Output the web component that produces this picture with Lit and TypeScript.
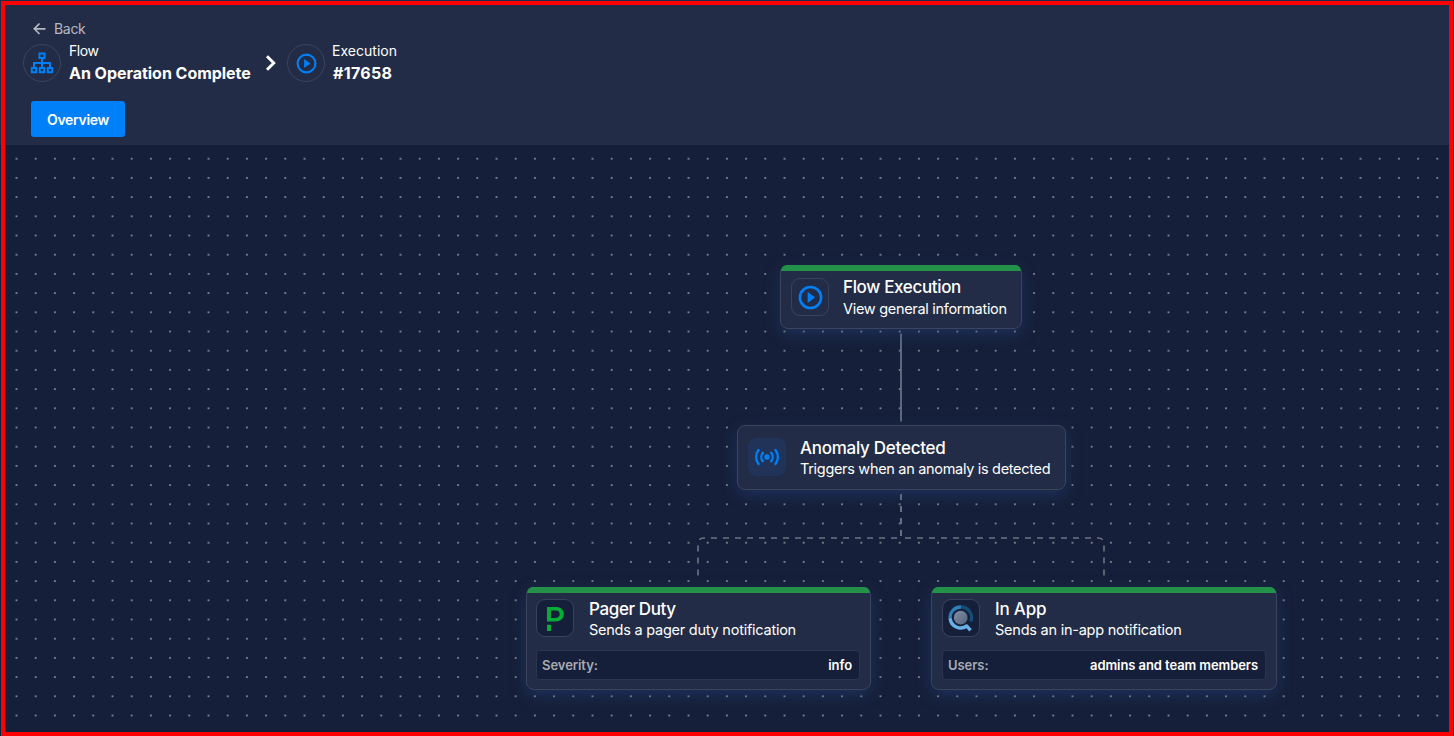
import { LitElement, html, css, svg } from "lit";
import { customElement, property } from "lit/decorators.js";

const play = svg`<circle cx="12" cy="12" r="10.6" fill="none" stroke="#0080f8" stroke-width="2.5"/><path d="M9.2 6.6v10.8l7.4-5.400z" fill="#0080f8"/>`;
const icons: Record<string, unknown> = {
  play: html`<svg width="25" height="25" viewBox="-0.5 -0.5 25 25">${play}</svg>`,
  signal: html`<svg width="26" height="20" viewBox="0 0 26 20" fill="none" stroke="#0080f8" stroke-width="2.3" stroke-linecap="round">
    <circle cx="13" cy="10" r="2.700" fill="#0080f8" stroke="none"/>
    <path d="M8.800 5.800a6.600 6.600 0 0 0 0 8.400M17.200 5.800a6.600 6.600 0 0 1 0 8.400M4.500 3a11.500 11.500 0 0 0 0 14M21.500 3a11.500 11.500 0 0 1 0 14"/></svg>`,
  pager: html`<svg width="24" height="28" viewBox="0 0 24 28" fill="#06ac38">
    <path fill-rule="evenodd" d="M4 3h8.500c5.300 0 8.300 2.700 8.300 7s-3 7.500-8.300 7.500H4zM8 6.500v7.400h4.500c2.700 0 4.200-1.300 4.200-3.800s-1.500-3.600-4.200-3.600z"/>
    <path d="M4 20.700h4v6.300h-4z"/></svg>`,
  app: html`<svg width="28" height="28" viewBox="0 0 28 28" fill="none">
    <defs><linearGradient id="core" x1="0" y1="0" x2="1" y2="1"><stop stop-color="#8490a5"/><stop offset="1" stop-color="#53637e"/></linearGradient></defs>
    <circle cx="13.700" cy="13.700" r="6.900" fill="url(#core)"/>
    <path d="M14 3a10.600 10.600 0 0 1 9.800 14.500" stroke="#154c78" stroke-width="3.300"/>
    <path d="M3.200 15a10.600 10.600 0 0 1 10.800-12" stroke="#2f7fb8" stroke-width="3.300"/>
    <path d="M3.200 14.500a10.500 10.500 0 0 0 16.600 7.500l3.700 4.300" stroke="#68b0e5" stroke-width="3.400" stroke-linejoin="round"/></svg>`,
};

@customElement("flow-node")
class FlowNode extends LitElement {
  @property() icon = "play";
  @property() heading = "";
  @property() text = "";
  @property() label = "";
  @property() value = "";
  @property({ type: Boolean }) done = false;
  static styles = css`
    :host { display: block; box-sizing: border-box; border: 1px solid #3b445b; border-radius: 8px; background: #232c46; position: relative; box-shadow: 0 5px 16px rgba(39, 75, 139, .42); color: #fff; }
    .bar { position: absolute; top: -1px; left: 0; right: 0; height: 6px; border-radius: 7px 7px 0 0; background: #249148; }
    .head { display: flex; padding: var(--head-top, 12px) 0 0 var(--inset, 10px); gap: var(--gap, 14px); }
    .tile { box-sizing: border-box; flex: none; width: 38px; height: 38px; border: 1px solid #38435b; border-radius: 9px; display: flex; align-items: center; justify-content: center; }
    .tile.signal { background: #22335a; border-color: #22335a; }
    .tile.pager, .tile.app { background: #161f39; }
    svg { display: block; }
    .title { font-size: 17px; line-height: var(--title-lh, 22px); font-weight: 500; white-space: nowrap; letter-spacing: var(--title-ls, -.2px); margin-top: var(--title-top, -2px); }
    .sub { font-size: 14.500px; line-height: 20px; white-space: nowrap; letter-spacing: var(--sub-ls, -.23px); }
    .field { box-sizing: border-box; display: flex; justify-content: space-between; align-items: center; height: 30px; margin: 10px 10px 0 var(--inset, 10px); padding: 0 7px 0 5px; border: 1px solid #2b354e; border-radius: 4px; background: #161f39; font-size: 13px; font-weight: 600; letter-spacing: -.08px; }
    .label { color: #a6abb5; letter-spacing: -.05px; }
  `;
  render() {
    return html`${this.done ? html`<div class="bar"></div>` : ""}
      <div class="head"><div class="tile ${this.icon}">${icons[this.icon]}</div>
        <div><div class="title">${this.heading}</div><div class="sub">${this.text}</div></div></div>
      ${this.label ? html`<div class="field"><span class="label">${this.label}</span><span>${this.value}</span></div>` : ""}`;
  }
}

@customElement("app-root")
class AppRoot extends LitElement {
  static styles = css`
    :host { display: block; width: 1454px; height: 736px; font-family: Inter, "Liberation Sans", sans-serif; color: #fff; background: #161f39; position: relative; overflow: hidden; }
    .page { display: flex; flex-direction: column; height: 100%; }
    .frame { position: absolute; inset: 1px 1px 0 1px; border: 4px solid #f00; pointer-events: none; }
    header { box-sizing: border-box; height: 145px; background: #232c46; padding: 20px 0 0 23px; }
    .back { display: flex; align-items: center; gap: 8px; height: 17px; padding-left: 10px; color: #b4b8c2; font-size: 14px; line-height: 17px; letter-spacing: -.3px; }
    .crumbs { display: flex; height: 50px; }
    .ring { box-sizing: border-box; width: 38px; height: 38px; margin-top: 7px; border: 1px solid #3b445b; border-radius: 50%; display: flex; align-items: center; justify-content: center; }
    .crumb { margin-left: 8px; padding-top: 4px; white-space: nowrap; }
    .crumb.last { margin-left: 7px; }
    .small { font-size: 14px; line-height: 20px; }
    .flow { letter-spacing: -.4px; }
    .exec { letter-spacing: .02px; }
    .strong { font-size: 16px; line-height: 24px; font-weight: 700; }
    .op { width: 182px; letter-spacing: -.03px; }
    .num { padding-left: 1px; letter-spacing: .3px; }
    .chev { margin: 18px 10px 0 14px; }
    .tab { display: flex; align-items: center; justify-content: center; margin: 14px 0 0 8px; width: 94px; height: 36px; border-radius: 3px; background: #0080f8; font-size: 14px; font-weight: 600; letter-spacing: -.3px; }
    main { flex: 1; position: relative; }
    .lines { position: absolute; left: 0; top: 0; }
    flow-node { position: absolute; }
    .n1 { left: 780px; top: 120px; width: 242px; height: 64px; --title-ls: -.35px; --sub-ls: -.3px; --title-lh: 23px; }
    .n2 { left: 737px; top: 280px; width: 329px; height: 65px; --title-ls: -.27px; --sub-ls: -.31px; --title-top: -1px; }
    .n3, .n4 { top: 442px; width: 345px; height: 103px; --head-top: 11px; --inset: 9px; --gap: 15px; --title-top: -1px; }
    .n3 { left: 526px; --title-ls: -.38px; --sub-ls: -.24px; }
    .n4 { left: 931px; width: 346px; --inset: 10px; }
  `;
  render() {
    return html`<div class="page">
      <header>
        <div class="back"><svg width="13" height="13" viewBox="0 0 13 13" fill="none" stroke="#b4b8c2" stroke-width="1.700"><path d="M12.500 6.800H1.500M6.500 1.500L1.300 6.800l5.200 5.200"/></svg><span>Back</span></div>
        <div class="crumbs">
          <div class="ring"><svg width="24" height="22" viewBox="0 0 24 22" fill="none" stroke="#0080f8" stroke-width="2"><path d="M9.500 1.500h5v4.500h-5zM1.800 16h4.400v4.300H1.800zM9.800 16h4.400v4.300H9.800zM17.800 16h4.400v4.300H17.800zM12 6v10M4 16v-5h16v5"/></svg></div>
          <div class="crumb"><div class="small flow">Flow</div><div class="strong op">An Operation Complete</div></div>
          <svg class="chev" width="12" height="16" viewBox="0 0 12 16" fill="none" stroke="#fff" stroke-width="2.900"><path d="M2 1.200L8.800 8 2 14.800"/></svg>
          <div class="ring"><svg width="21" height="21" viewBox="-0.500 -0.500 25 25">${play}</svg></div>
          <div class="crumb last"><div class="small exec">Execution</div><div class="strong num">#17658</div></div>
        </div>
        <div class="tab">Overview</div>
      </header>
      <main>
        <svg class="lines" width="1454" height="591" fill="none">
          <defs><pattern id="dots" x="6.900" y="4.100" width="19.200" height="19.200" patternUnits="userSpaceOnUse"><circle cx="9.600" cy="9.600" r=".88" fill="#a2a5a9"/></pattern></defs>
          <rect width="1454" height="591" fill="url(#dots)"/>
          <path d="M901 188.500v88" stroke="#687083" stroke-width="1.800"/>
          <g stroke="#6e7482" stroke-width="1.600" stroke-dasharray="6 6">
            <path d="M901 349v44H704q-6 0-6 6v34"/><path d="M901 349v44h197q6 0 6 6v34"/>
          </g>
        </svg>
        <flow-node class="n1" done icon="play" heading="Flow Execution" text="View general information"></flow-node>
        <flow-node class="n2" icon="signal" heading="Anomaly Detected" text="Triggers when an anomaly is detected"></flow-node>
        <flow-node class="n3" done icon="pager" heading="Pager Duty" text="Sends a pager duty notification" label="Severity:" value="info"></flow-node>
        <flow-node class="n4" done icon="app" heading="In App" text="Sends an in-app notification" label="Users:" value="admins and team members"></flow-node>
      </main>
    </div><div class="frame"></div>`;
  }
}
